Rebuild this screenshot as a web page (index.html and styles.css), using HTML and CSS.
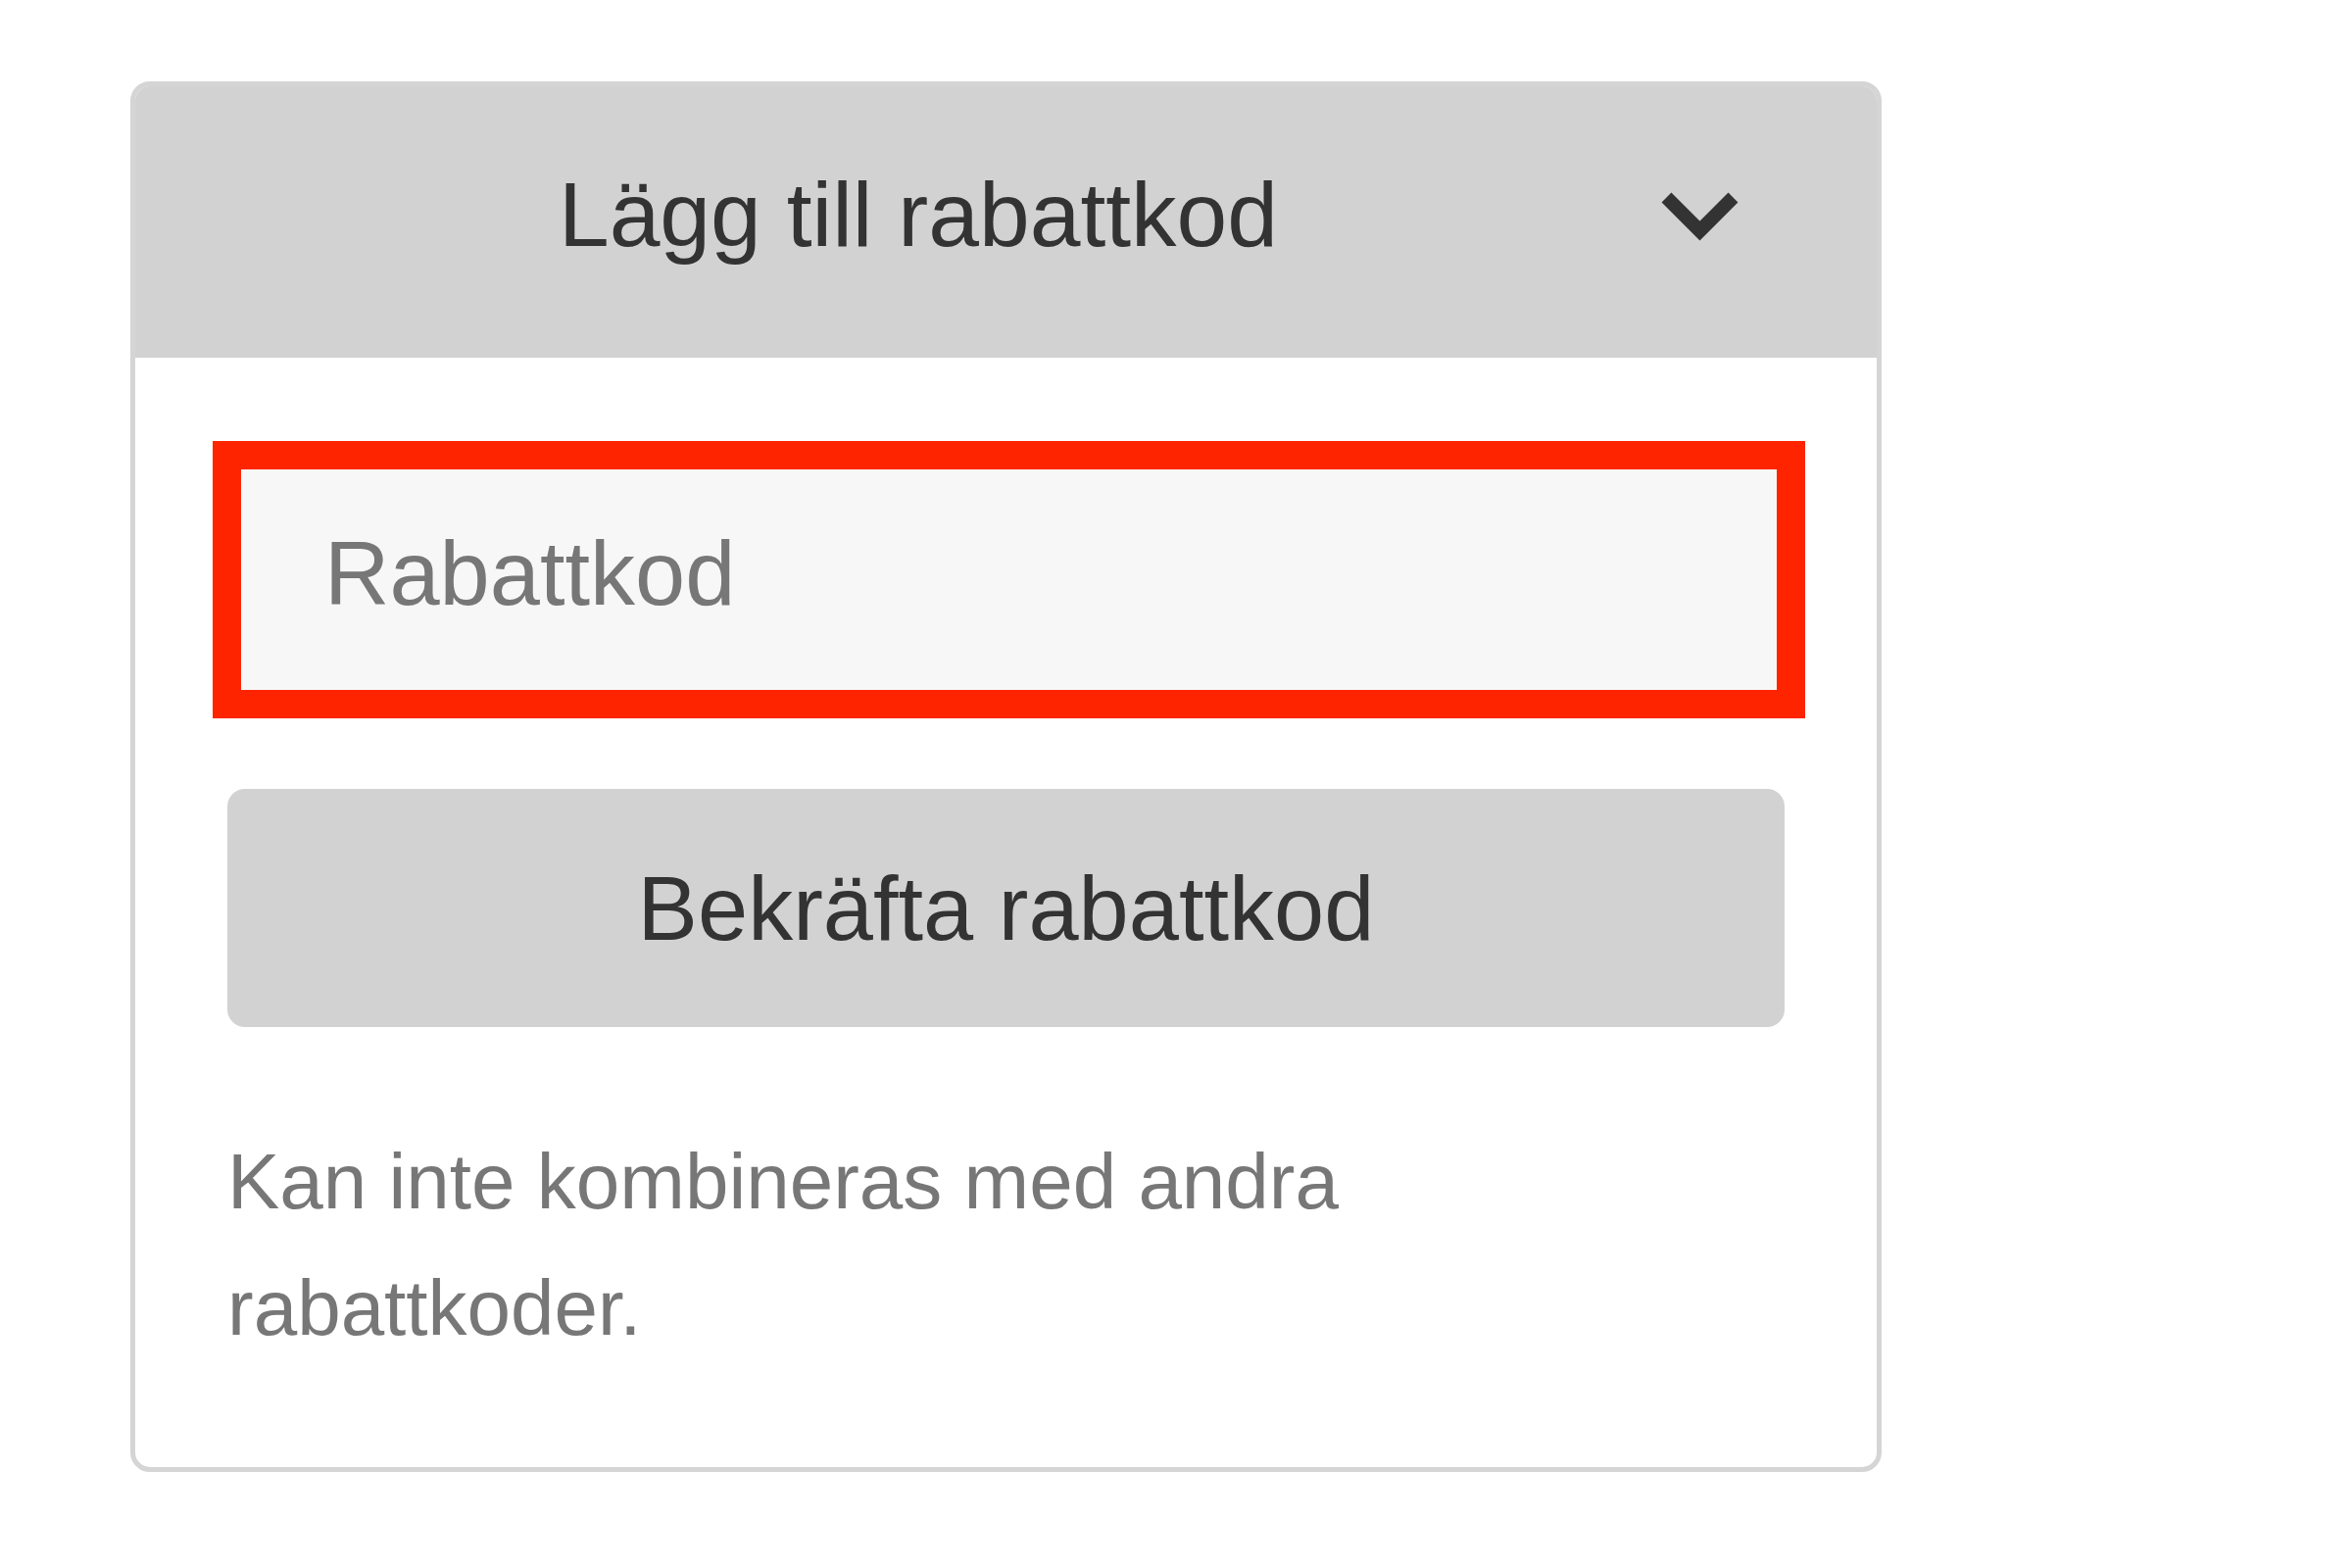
FILE: index.html
```html
<!DOCTYPE html>
<html lang="sv">
<head>
<meta charset="utf-8">
<title>Lägg till rabattkod</title>
<link rel="stylesheet" href="styles.css">
</head>
<body>
  <section class="card">
    <header class="card-header">
      <h2 class="card-title">Lägg till rabattkod</h2>
      <svg class="chevron" width="79" height="53" viewBox="0 0 79 53" aria-hidden="true">
        <path d="M5.5 8.5 L39.5 42.5 L73.5 8.5" fill="none" stroke="#333" stroke-width="14" stroke-linejoin="miter" stroke-linecap="butt"/>
      </svg>
    </header>
    <div class="card-body">
      <div class="field">
        <input class="code-input" type="text" placeholder="Rabattkod">
      </div>
      <button class="confirm-btn" type="button">Bekräfta rabattkod</button>
      <p class="note">Kan inte kombineras med andra rabattkoder.</p>
    </div>
  </section>
</body>
</html>
```

FILE: styles.css
```css
* {
  box-sizing: border-box;
}

html, body {
  margin: 0;
  background: #ffffff;
}

body {
  padding: 83px 0 0 133px;
  font-family: "Liberation Sans", Arial, Helvetica, sans-serif;
}

.card {
  width: 1787px;
  border: 5px solid #d5d5d5;
  border-radius: 20px;
  overflow: hidden;
  background: #ffffff;
}

.card-header {
  height: 277px;
  background: #d2d2d2;
  display: flex;
  align-items: center;
  padding: 0 141px 14px 41px;
}

.card-title {
  flex: 1;
  margin: 0;
  text-align: center;
  font-size: 93px;
  font-weight: normal;
  line-height: 1;
  color: #333333;
}

.chevron {
  display: block;
  flex: none;
}

.card-body {
  padding: 85px 0 98px;
}

.field {
  margin: 0 73px 0 79px;
  border: 29px solid #ff2400;
  background: #f7f7f7;
}

.code-input {
  display: block;
  width: 100%;
  height: 225px;
  border: 0;
  outline: none;
  margin: 0;
  padding: 0 20px 13px 85px;
  background: #f7f7f7;
  font-family: "Liberation Sans", Arial, Helvetica, sans-serif;
  font-size: 92px;
  color: #333333;
}

.code-input::placeholder {
  color: #777777;
  opacity: 1;
}

.confirm-btn {
  display: flex;
  align-items: center;
  justify-content: center;
  width: calc(100% - 188px);
  height: 243px;
  margin: 72px 94px 0;
  border: 0;
  border-radius: 18px;
  background: #d2d2d2;
  font-family: "Liberation Sans", Arial, Helvetica, sans-serif;
  font-size: 92px;
  line-height: 1;
  color: #333333;
  padding: 0;
}

.note {
  margin: 93px 300px 0 94px;
  font-size: 80px;
  line-height: 129px;
  color: #777777;
}
```
